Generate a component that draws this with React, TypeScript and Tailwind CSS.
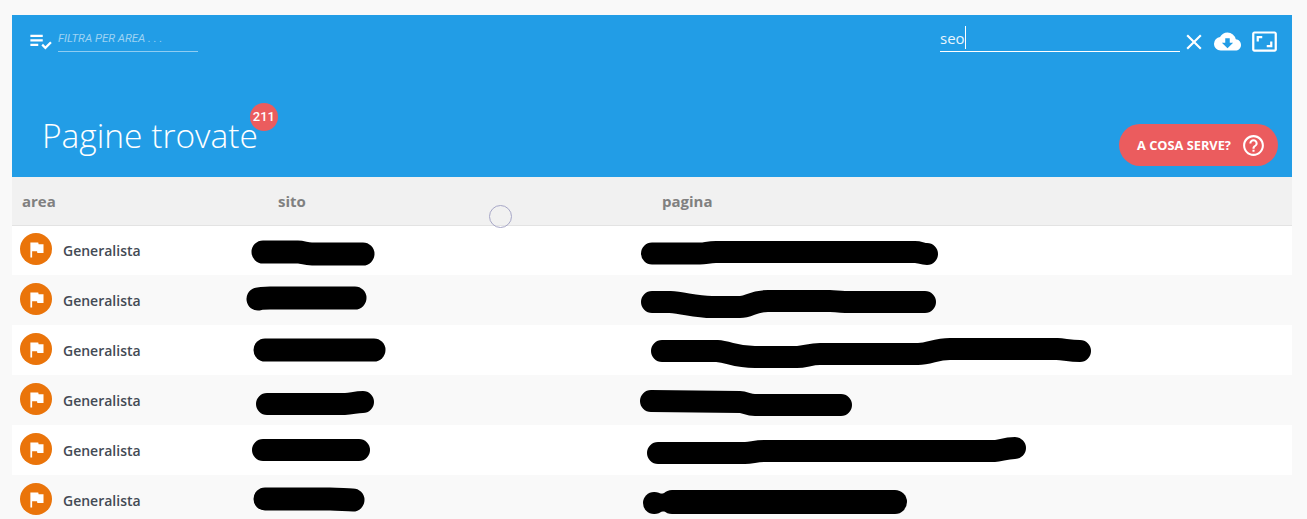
import { MdPlaylistAddCheck, MdClose, MdCloudDownload, MdAspectRatio, MdHelpOutline, MdFlag } from "react-icons/md";

const marks: { w: number; d: string }[] = [
  { w: 23, d: "M263 252 L298 252 C303 252 305 254 312 254 L363 254" },
  { w: 23, d: "M258 299 C261 298 264 298 270 298 L355 298" },
  { w: 23, d: "M265 350 L374 350" },
  { w: 22, d: "M267 404 L345 404 C352 404 355 402 363 402" },
  { w: 22, d: "M263 450 L359 450" },
  { w: 23, d: "M265 499 L330 499 C340 499 345 500 353 500" },
  { w: 22, d: "M652 253.5 L700 253.5 C706 253.5 708 252 716 252 L915 252 C920 252 922 254 927 254" },
  { w: 22, d: "M652 302 L670 302 C685 303 695 307 712 307 L740 307 C750 307 752 301 768 301 L830 301 C835 301 838 302 845 302 L925 302" },
  { w: 22, d: "M662 351 L717 351 C730 352 735 357 755 357 L797 357 C805 357 810 354 820 354 L918 354 C930 354 935 349 950 349 L1057 349 C1065 349.5 1070 351 1080 351" },
  { w: 22, d: "M651 401 L740 402 C745 402 748 405 755 405 L841 405" },
  { w: 22, d: "M658 453 L745 453 C752 453 755 451 765 451 L995 451 C1000 451 1005 448 1015 448" },
  { w: 22, d: "M654 503 L654.5 503" },
  { w: 18, d: "M654 503 L672 502" },
  { w: 24, d: "M672 502 L895 502" },
];

function Row({ index }: { index: number }) {
  const first = index === 0;
  return (
    <div className={`grid grid-cols-[266px_384px_1fr] ${first ? "h-[49px]" : "h-[50px]"} ${index % 2 === 1 ? "bg-[#f9f9f9]" : "bg-white"}`}>
      <div className="flex items-start pl-2">
        <span className={`flex h-8 w-8 items-center justify-center rounded-full bg-[#ea740a] ${first ? "mt-[7px]" : "mt-2"}`}>
          <MdFlag size={21} className="text-white" />
        </span>
        <span className={`ml-[11px] text-[14px] leading-5 font-semibold text-[#434a54] ${first ? "mt-[15px]" : "mt-4"}`}>Generalista</span>
      </div>
      <div />
      <div />
    </div>
  );
}

export default function App() {
  return (
    <div className="relative h-[519px] overflow-hidden bg-[#f9f9f9] pt-[15px] pr-[15px] pl-3 font-['Open_Sans',sans-serif]">
      <div className="flex h-[162px] flex-col justify-between bg-[#229de6] text-white">
        <div className="flex items-start justify-between pt-[11px] pr-[14px] pl-4">
          <div className="flex items-start">
            <MdPlaylistAddCheck size={27} className="mt-[2px] -ml-[1px] text-white" />
            <div className="ml-1 h-[26px] w-[140px] border-b border-[#8fcdf2] font-['Roboto',sans-serif] text-[11.4px] leading-[25px] text-[#9ed3f3] italic">
              FILTRA PER AREA . . .
            </div>
          </div>
          <div className="flex items-start">
            <div className="flex h-[26px] w-[240px] items-start border-b border-white text-[15px] leading-[25px] text-[#e8f5fd]">
              seo<span className="h-[23px] w-px bg-white" />
            </div>
            <MdClose size={26} className="mt-[3px] ml-px" />
            <MdCloudDownload size={27} className="mt-[2px] ml-[7px]" />
            <MdAspectRatio size={27} className="mt-[2px] ml-[10px]" />
          </div>
        </div>
        <div className="flex items-end justify-between pr-[14px] pb-[11px] pl-[30px]">
          <div className="relative mb-2 text-[33.5px] leading-[46px] font-light">
            Pagine trovate
            <span className="absolute -top-[9px] -right-[20px] flex h-7 w-7 items-center justify-center rounded-full bg-[#eb5c5e] font-['Roboto',sans-serif] text-[13px] font-medium">
              211
            </span>
          </div>
          <div className="flex h-[42px] w-[159px] items-center rounded-full bg-[#eb5c5e] pl-[18px]">
            <span className="mt-px text-[12.8px] font-bold">A COSA SERVE?</span>
            <MdHelpOutline size={25} className="ml-[10px]" />
          </div>
        </div>
      </div>
      <div className="grid h-[49px] grid-cols-[266px_384px_1fr] border-b border-[#e3e3e3] bg-[#f1f1f1] pt-[14px] text-[15px] leading-5 font-bold text-[#808080]">
        <div className="pl-[10px]">area</div>
        <div>sito</div>
        <div>pagina</div>
      </div>
      {[0, 1, 2, 3, 4, 5].map((i) => (
        <Row key={i} index={i} />
      ))}
      <svg className="pointer-events-none absolute top-0 left-0" width="1307" height="519" fill="none">
        {marks.map((m, i) => (
          <path key={i} d={m.d} stroke="#000" strokeWidth={m.w} strokeLinecap="round" strokeLinejoin="round" />
        ))}
      </svg>
      <span className="pointer-events-none absolute top-[205px] left-[489px] h-[23px] w-[23px] rounded-full border border-[#a7a7c7]" />
    </div>
  );
}
